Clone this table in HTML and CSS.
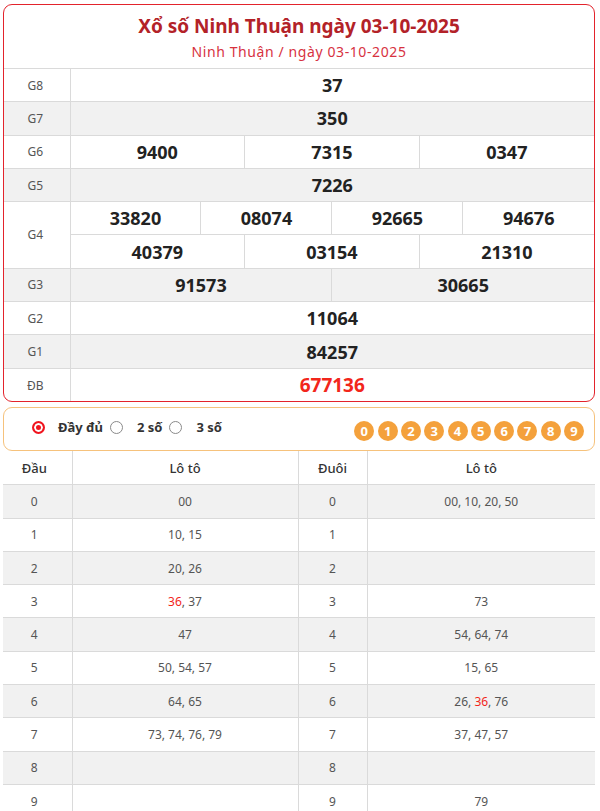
FILE: index.html
```html
<!DOCTYPE html>
<html lang="vi">
<head>
<meta charset="utf-8">
<title>Xổ số Ninh Thuận ngày 03-10-2025</title>
<link rel="stylesheet" href="styles.css">
</head>
<body>
<div class="page">
  <section class="card">
    <header class="card-head">
      <h1 class="title">Xổ số Ninh Thuận ngày 03-10-2025</h1>
      <div class="crumb"><a>Ninh Thuận</a> / <a>ngày 03-10-2025</a></div>
    </header>
    <table class="kq">
      <colgroup>
        <col class="c-label">
        <col span="12">
      </colgroup>
      <tr><td class="lbl">G8</td><td class="num" colspan="12">37</td></tr>
      <tr class="alt"><td class="lbl">G7</td><td class="num" colspan="12">350</td></tr>
      <tr><td class="lbl">G6</td><td class="num" colspan="4">9400</td><td class="num" colspan="4">7315</td><td class="num" colspan="4">0347</td></tr>
      <tr class="alt"><td class="lbl">G5</td><td class="num" colspan="12">7226</td></tr>
      <tr><td class="lbl" rowspan="2">G4</td><td class="num" colspan="3">33820</td><td class="num" colspan="3">08074</td><td class="num" colspan="3">92665</td><td class="num" colspan="3">94676</td></tr>
      <tr><td class="num" colspan="4">40379</td><td class="num" colspan="4">03154</td><td class="num" colspan="4">21310</td></tr>
      <tr class="alt"><td class="lbl">G3</td><td class="num" colspan="6">91573</td><td class="num" colspan="6">30665</td></tr>
      <tr><td class="lbl">G2</td><td class="num" colspan="12">11064</td></tr>
      <tr class="alt"><td class="lbl">G1</td><td class="num" colspan="12">84257</td></tr>
      <tr><td class="lbl">ĐB</td><td class="num db" colspan="12">677136</td></tr>
    </table>
  </section>

  <div class="filter">
    <div class="opts">
      <label class="opt"><span class="radio on"></span><span>Đầy đủ</span></label>
      <label class="opt"><span class="radio"></span><span>2 số</span></label>
      <label class="opt"><span class="radio"></span><span>3 số</span></label>
    </div>
    <div class="balls">
      <span class="ball">0</span><span class="ball">1</span><span class="ball">2</span><span class="ball">3</span><span class="ball">4</span><span class="ball">5</span><span class="ball">6</span><span class="ball">7</span><span class="ball">8</span><span class="ball">9</span>
    </div>
  </div>

  <table class="loto">
    <colgroup>
      <col class="c1"><col class="c2"><col class="c3"><col class="c4">
    </colgroup>
    <tr class="head"><th>Đầu</th><th>Lô tô</th><th>Đuôi</th><th>Lô tô</th></tr>
    <tr class="alt"><td>0</td><td>00</td><td>0</td><td>00, 10, 20, 50</td></tr>
    <tr><td>1</td><td>10, 15</td><td>1</td><td></td></tr>
    <tr class="alt"><td>2</td><td>20, 26</td><td>2</td><td></td></tr>
    <tr><td>3</td><td><span class="hl">36</span>, 37</td><td>3</td><td>73</td></tr>
    <tr class="alt"><td>4</td><td>47</td><td>4</td><td>54, 64, 74</td></tr>
    <tr><td>5</td><td>50, 54, 57</td><td>5</td><td>15, 65</td></tr>
    <tr class="alt"><td>6</td><td>64, 65</td><td>6</td><td>26, <span class="hl">36</span>, 76</td></tr>
    <tr><td>7</td><td>73, 74, 76, 79</td><td>7</td><td>37, 47, 57</td></tr>
    <tr class="alt"><td>8</td><td></td><td>8</td><td></td></tr>
    <tr><td>9</td><td></td><td>9</td><td>79</td></tr>
  </table>
</div>
</body>
</html>
```

FILE: styles.css
```css
* { box-sizing: border-box; }
html, body { margin: 0; padding: 0; background: #fff; }
body {
  font-family: "Noto Sans", "Open Sans", sans-serif;
  color: #333;
}
.page { padding: 4px 5px 0 3px; }

.card {
  border: 1px solid #e3232c;
  border-radius: 9px;
  overflow: hidden;
}
.card-head {
  text-align: center;
  padding: 8px 0 7px;
}
.title {
  margin: 0;
  font-size: 19px;
  line-height: 26px;
  font-weight: 700;
  color: #b32228;
}
.crumb {
  margin-top: 3px;
  font-size: 14px;
  line-height: 19px;
  letter-spacing: 0.6px;
  color: #d7323f;
}
.crumb a { color: #d7323f; }

.kq {
  width: 100%;
  border-collapse: collapse;
  table-layout: fixed;
}
.kq .c-label { width: 66px; }
.kq td {
  border-top: 1px solid #dadada;
  border-left: 1px solid #dadada;
  height: 33.3px;
  padding: 0;
  text-align: center;
  vertical-align: middle;
}
.kq td.lbl { border-left: none; font-size: 12px; color: #555; padding-right: 3px; }
.kq tr.alt td { background: #f1f1f1; }
.kq .num {
  font-size: 18px;
  font-weight: 700;
  color: #222;
  line-height: 24px;
}
.kq .num.db { color: #f2261b; font-size: 19px; }

.filter {
  margin-top: 5px;
  height: 44px;
  border: 1px solid #f6c27c;
  border-radius: 9px;
  display: flex;
  align-items: center;
  justify-content: space-between;
  padding: 0 10px 0 27px;
}
.opts { display: flex; align-items: center; margin-top: -4px; }
.opt {
  display: flex;
  align-items: center;
  font-size: 13px;
  font-weight: 700;
  color: #333;
}
.radio {
  width: 13px;
  height: 13px;
  border-radius: 50%;
  border: 1px solid #8a8a8a;
  background: #fff;
  margin: 0 14px 0 7px;
}
.radio.on {
  border: 2px solid #f0141e;
  background: #f0141e;
  box-shadow: inset 0 0 0 2px #fff;
  margin: 0 13px 0 1px;
}
.balls { display: flex; gap: 3.3px; margin-top: 3px; }
.ball {
  width: 20px;
  height: 20px;
  border-radius: 50%;
  background: #f4a13c;
  color: #fff;
  font-weight: 700;
  font-size: 13px;
  line-height: 20px;
  text-align: center;
}

.loto {
  width: 100%;
  border-collapse: collapse;
  table-layout: fixed;
  margin-top: 0;
}
.loto .c1 { width: 69px; }
.loto .c2 { width: 226px; }
.loto .c3 { width: 69px; }
.loto th, .loto td {
  height: 33.3px;
  padding: 0;
  text-align: center;
  vertical-align: middle;
  border-bottom: 1px solid #dadada;
  border-left: 1px solid #dadada;
  font-size: 12px;
  color: #555;
}
.loto th:first-child, .loto td:first-child { border-left: none; padding-right: 6px; }
.loto th { font-weight: 500; font-size: 13px; color: #333; }
.loto tr.alt td { background: #f1f1f1; }
.hl { color: #f2261b; }
```
